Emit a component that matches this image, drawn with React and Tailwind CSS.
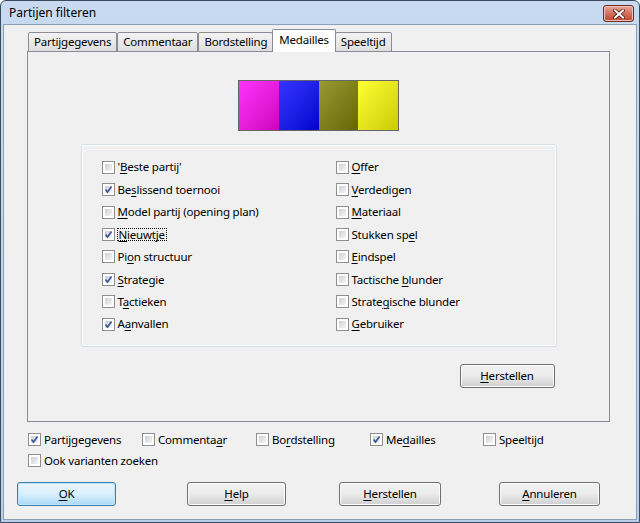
import React from "react";

const FONT = {
  fontFamily: '"Segoe UI", "Noto Sans", "Liberation Sans", sans-serif',
  fontSize: "11.5px",
  letterSpacing: "-0.2px",
};

// label text with one underlined accelerator letter, given as [before, key, after]
function Acc({ parts }) {
  if (typeof parts === "string") return <span>{parts}</span>;
  const [a, k, b] = parts;
  return (
    <span>
      {a}
      <span className="underline underline-offset-[2px]">{k}</span>
      {b}
    </span>
  );
}

function Box({ checked }) {
  return (
    <span className="relative inline-block h-[13px] w-[13px] shrink-0 border border-[#8e8f8f] bg-white">
      <span className="absolute inset-[2px] bg-gradient-to-br from-[#cbcfd5] to-[#f6f6f6]" />
      {checked && (
        <svg className="absolute inset-0" width="11" height="11" viewBox="0 0 11 11">
          <path d="M2.5 5.5 L4.5 8 L8.5 2.5" fill="none" stroke="#3f569a" strokeWidth="1.7" />
        </svg>
      )}
    </span>
  );
}

function Check({ label, checked, focus, className = "" }) {
  return (
    <div className={`flex items-center gap-[2px] whitespace-nowrap leading-none text-black ${className}`}>
      <Box checked={checked} />
      <span className={focus ? "border border-dotted border-black px-[1px]" : "px-[1px]"}>
        <Acc parts={label} />
      </span>
    </div>
  );
}

function Button({ label, w, primary }) {
  const base = "flex h-[24px] items-center justify-center rounded-[3px] border text-black";
  const look = primary
    ? "border-[#3c7fb1] bg-gradient-to-b from-[#eaf6fd] via-[#d9f0fc] to-[#a7d9f5] shadow-[inset_0_0_0_1px_#bfe4f9]"
    : "border-[#707070] bg-gradient-to-b from-[#f2f2f2] via-[#ebebeb] to-[#cfcfcf] shadow-[inset_0_0_0_1px_#fcfcfc]";
  return (
    <div className={`${base} ${look}`} style={{ width: w }}>
      <Acc parts={label} />
    </div>
  );
}

const LEFT = [
  [["'", "B", "este partij'"], false],
  [["Be", "s", "lissend toernooi"], true],
  [["", "M", "odel partij (opening plan)"], false],
  [["", "N", "ieuwtje"], true, true],
  [["Pi", "o", "n structuur"], false],
  [["", "S", "trategie"], true],
  [["T", "a", "ctieken"], false],
  [["A", "a", "nvallen"], true],
];

const RIGHT = [
  [["", "O", "ffer"], false],
  [["", "V", "erdedigen"], false],
  [["", "M", "ateriaal"], false],
  [["Stukken sp", "e", "l"], false],
  [["", "E", "indspel"], false],
  [["Tactische ", "b", "lunder"], false],
  [["Strate", "g", "ische blunder"], false],
  [["", "G", "ebruiker"], false],
];

const TABS = ["Partijgegevens", "Commentaar", "Bordstelling", "Medailles", "Speeltijd"];

export default function App() {
  return (
    <div
      className="flex h-[523px] w-[640px] flex-col overflow-hidden rounded-t-[6px] border border-[#3b4b5e] bg-gradient-to-b from-[#c7daef] to-[#b9d0ea] px-[2px] pb-[2px]"
      style={FONT}
    >
      {/* title bar */}
      <div className="flex h-[23px] shrink-0 items-center justify-between pl-[6px] pr-[3px]">
        <span className="text-[12px] tracking-normal text-black">Partijen filteren</span>
        <div className="mt-[2px] flex h-[17px] w-[31px] items-center justify-center rounded-[3px] border border-[#6b2b22] bg-gradient-to-b from-[#e8a99b] via-[#d2705c] to-[#c0442c] shadow-[inset_0_0_0_1px_#f1c3b8]">
          <svg width="12" height="10" viewBox="0 0 12 10">
            <path d="M2 1.5 L10 8.5 M10 1.5 L2 8.5" stroke="#4a1a14" strokeWidth="3.6" strokeLinecap="square" />
            <path d="M2 1.5 L10 8.5 M10 1.5 L2 8.5" stroke="#ffffff" strokeWidth="2" strokeLinecap="square" />
          </svg>
        </div>
      </div>

      {/* client area */}
      <div className="flex flex-1 flex-col border border-[#8a9fba] bg-[#f0f0f0]">
        <div className="ml-[23px] mt-[4px] w-[583px]">
          {/* tabs */}
          <div className="relative z-10 -mb-px flex h-[23px] items-end pl-[1px]">
            {TABS.map((t) =>
              t === "Medailles" ? (
                <div
                  key={t}
                  className="-mx-[1px] flex h-[23px] items-center rounded-t-[2px] border border-b-0 border-[#898c95] bg-white px-[6px] pb-[2px] text-black"
                >
                  {t}
                </div>
              ) : (
                <div
                  key={t}
                  className="flex h-[20px] items-center rounded-t-[2px] border border-[#898c95] bg-gradient-to-b from-[#f3f3f3] to-[#dfdfdf] px-[5px] text-black"
                >
                  {t}
                </div>
              )
            )}
          </div>

          {/* tab panel */}
          <div className="flex h-[371px] flex-col items-center border border-[#898c95] bg-[#f0f0f0]">
            <div className="mt-[28px] flex h-[51px] w-[161px] border border-[#666666]">
              <div className="flex-1 bg-gradient-to-br from-[#ff33ff] to-[#cc00bb]" />
              <div className="flex-1 bg-gradient-to-br from-[#3333ff] to-[#0000cc]" />
              <div className="flex-1 bg-gradient-to-br from-[#9a9a33] to-[#666600]" />
              <div className="flex-1 bg-gradient-to-br from-[#ffff33] to-[#cccc00]" />
            </div>

            <div className="mt-[13px] flex h-[203px] w-[476px] rounded-[3px] border border-[#d5dfe5] pt-[11px] shadow-[inset_0_0_0_1px_#ffffff]">
              <div className="ml-[20px] flex w-[234px] flex-col">
                {LEFT.map(([l, c, f], i) => (
                  <div key={i} className="flex h-[22.43px] items-center">
                    <Check label={l} checked={c} focus={f} />
                  </div>
                ))}
              </div>
              <div className="flex flex-col">
                {RIGHT.map(([l, c], i) => (
                  <div key={i} className="flex h-[22.43px] items-center">
                    <Check label={l} checked={c} />
                  </div>
                ))}
              </div>
            </div>

            <div className="mt-[17px] flex w-[472px] justify-end">
              <Button label={["", "H", "erstellen"]} w={95} />
            </div>
          </div>
        </div>

        {/* bottom options */}
        <div className="ml-[24px] mt-[11px] grid grid-cols-[114px_114px_114px_113px_114px] gap-y-[8px]">
          <Check label="Partijgegevens" checked />
          <Check label={["Commenta", "a", "r"]} />
          <Check label={["Bo", "r", "dstelling"]} />
          <Check label={["Me", "d", "ailles"]} checked />
          <Check label="Speeltijd" />
          <Check label="Ook varianten zoeken" className="col-span-2" />
        </div>

        <div className="ml-[13px] mt-[15px] flex">
          <Button label={["", "O", "K"]} w={99} primary />
          <div className="w-[71px]" />
          <Button label={["", "H", "elp"]} w={99} />
          <div className="w-[53px]" />
          <Button label={["", "H", "erstellen"]} w={102} />
          <div className="w-[58px]" />
          <Button label={["", "A", "nnuleren"]} w={101} />
        </div>
      </div>
    </div>
  );
}
